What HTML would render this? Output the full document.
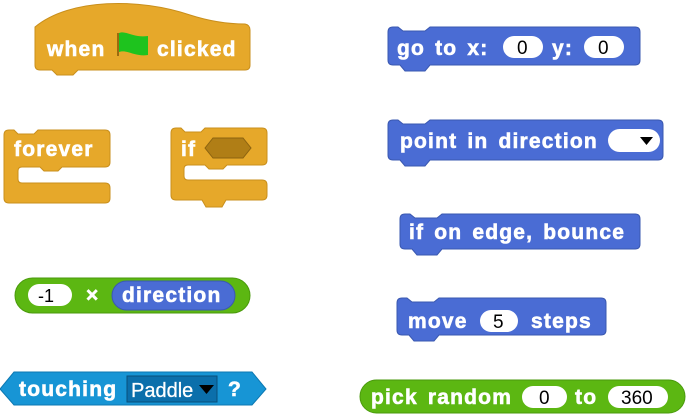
<!DOCTYPE html>
<html><head><meta charset="utf-8"><style>
html,body{margin:0;padding:0;background:#fff;width:687px;height:416px;overflow:hidden}
svg text{font-family:"Liberation Sans",Arial,sans-serif;font-weight:bold;font-size:21px;letter-spacing:1.2px;word-spacing:3px;fill:#fff;stroke:#fff;stroke-width:0.6px;paint-order:stroke}
.n{font-weight:normal;fill:#000;stroke:none;letter-spacing:0}
</style></head><body>
<svg width="687" height="416" viewBox="0 0 687 416" xmlns="http://www.w3.org/2000/svg">
<path d="M35,27 C70,-2 140,-2 190,15 C215,23 235,24 245,24 Q250,25 250,30 L250,65 Q250,70 245,70 L78,70 L73,75 L57,75 L52,70 L40,70 Q35,70 35,65 Z" fill="#e6a82a" stroke="#c98f1c" stroke-width="1"/>
<text x="47" y="56">when</text>
<path d="M117,33 L119,33 L119,56 L117,56 Z" fill="#9a6a10"/>
<path d="M119,33 C126,30 132,38 148,36 L148,55 C134,57 127,49 119,52 Z" fill="#1ec31e"/>
<text x="157" y="56">clicked</text>
<path d="M4,135 Q4,130 9,130 L14,130 L18,134 L34,134 L38,130 L105,130 Q110,130 110,135 L110,162 Q110,167 105,167 L62,167 L58,171 L44,171 L40,167 L22,167 Q18,167 18,171 L18,179 Q18,183 22,183 L105,183 Q110,183 110,188 L110,198 Q110,203 105,203 L9,203 Q4,203 4,198 Z" fill="#e6a82a" stroke="#c98f1c" stroke-width="1"/>
<text x="14" y="156">forever</text>
<path d="M171,133 Q171,128 176,128 L181,128 L185,132 L201,132 L205,128 L262,128 Q267,128 267,133 L267,160 Q267,165 262,165 L227,165 L223,169 L209,169 L205,165 L188,165 Q184,165 184,169 L184,176 Q184,180 188,180 L262,180 Q267,180 267,185 L267,195 Q267,200 262,200 L226,200 L222,207 L206,207 L202,200 L176,200 Q171,200 171,195 Z" fill="#e6a82a" stroke="#c98f1c" stroke-width="1"/>
<text x="181" y="156">if</text>
<path d="M205,148 L213,138 L243,138 L251,148 L243,158 L213,158 Z" fill="#b07e16" stroke="#8c6310" stroke-width="1"/>
<rect x="15" y="278" width="235" height="35" rx="17.5" fill="#5cb712" stroke="#4a9a0c"/>
<rect x="28" y="284" width="44" height="22" rx="11" fill="#fff"/>
<text class="n" x="38" y="302" style="font-size:18px">-1</text>
<text x="86" y="302">×</text>
<rect x="112" y="281" width="123" height="29" rx="14.5" fill="#4a6cd4" stroke="#3a58b0"/>
<text x="122" y="302">direction</text>
<path d="M0,389 L14,372 L252,372 L266,389 L252,405 L14,405 Z" fill="#1795d5" stroke="#0c78b2"/>
<text x="19" y="396">touching</text>
<rect x="127" y="376" width="90" height="26" fill="#0b6fab" stroke="#0a4f7a"/>
<text x="131" y="397" style="letter-spacing:0;font-weight:normal;font-size:20px;stroke-width:0.3px">Paddle</text>
<path d="M199,385 L214,385 L206.5,394 Z" fill="#000"/>
<text x="228" y="396">?</text>
<path d="M388,32 Q388,27 393,27 L398,27 L403,31 L425,31 L430,27 L635,27 Q640,27 640,32 L640,60 Q640,65 635,65 L430,65 L425,71 L405,71 L400,65 L393,65 Q388,65 388,60 Z" fill="#4a6cd4" stroke="#3a58b0"/>
<text x="397" y="55">go to x:</text>
<rect x="503" y="36" width="40" height="22" rx="11" fill="#fff"/>
<text class="n" x="517" y="54" style="font-size:19px">0</text>
<text x="552" y="55">y:</text>
<rect x="584" y="36" width="40" height="22" rx="11" fill="#fff"/>
<text class="n" x="598" y="54" style="font-size:19px">0</text>
<path d="M388,125 Q388,120 393,120 L398,120 L403,124 L425,124 L430,120 L658,120 Q663,120 663,125 L663,155 Q663,160 658,160 L430,160 L425,166 L405,166 L400,160 L393,160 Q388,160 388,155 Z" fill="#4a6cd4" stroke="#3a58b0"/>
<text x="400" y="148">point in direction</text>
<rect x="608" y="129" width="52" height="23" rx="11.5" fill="#fff"/>
<path d="M640,137 L653,137 L646.5,145 Z" fill="#000"/>
<path d="M400,219 Q400,214 405,214 L410,214 L415,218 L437,218 L442,214 L635,214 Q640,214 640,219 L640,244 Q640,249 635,249 L442,249 L437,255 L417,255 L412,249 L405,249 Q400,249 400,244 Z" fill="#4a6cd4" stroke="#3a58b0"/>
<text x="409" y="239">if on edge, bounce</text>
<path d="M397,303 Q397,298 402,298 L407,298 L412,302 L434,302 L439,298 L601,298 Q606,298 606,303 L606,330 Q606,335 601,335 L439,335 L434,341 L414,341 L409,335 L402,335 Q397,335 397,330 Z" fill="#4a6cd4" stroke="#3a58b0"/>
<text x="408" y="328">move</text>
<rect x="480" y="310" width="38" height="22" rx="11" fill="#fff"/>
<text class="n" x="493" y="328" style="font-size:19px">5</text>
<text x="531" y="328">steps</text>
<rect x="360" y="380" width="325" height="33" rx="16.5" fill="#5cb712" stroke="#4a9a0c"/>
<text x="371" y="404">pick random</text>
<rect x="522" y="386" width="45" height="22" rx="11" fill="#fff"/>
<text class="n" x="539" y="404" style="font-size:19px">0</text>
<text x="575" y="404">to</text>
<rect x="608" y="386" width="60" height="22" rx="11" fill="#fff"/>
<text class="n" x="621" y="404" style="font-size:19px">360</text>
</svg>
</body></html>
